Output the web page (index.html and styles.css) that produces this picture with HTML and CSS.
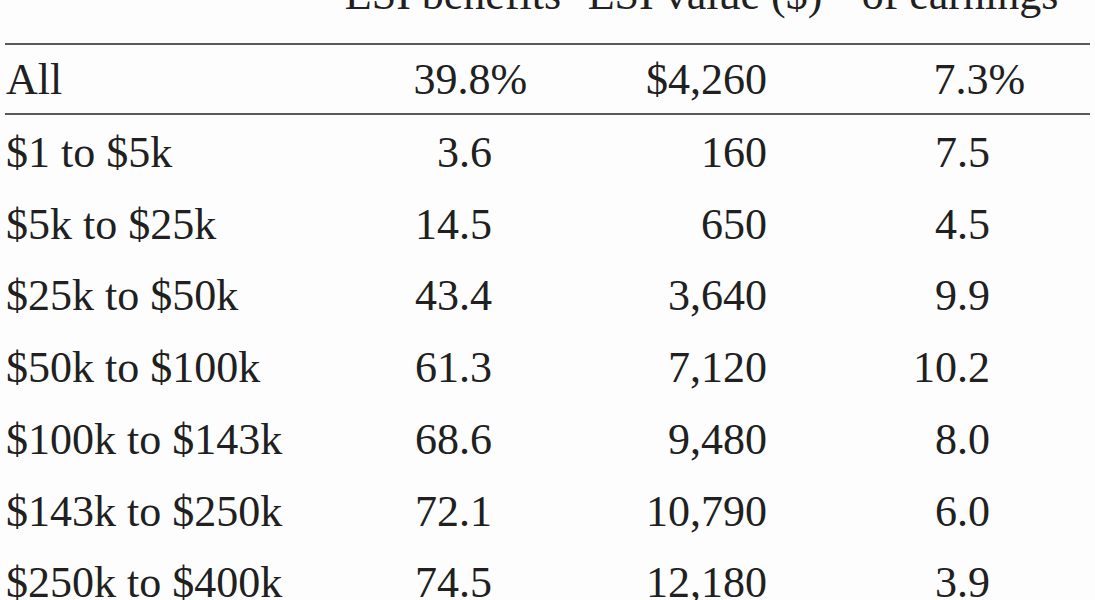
FILE: index.html
```html
<!DOCTYPE html>
<html lang="en">
<head>
    <meta charset="UTF-8">
    <meta name="viewport" content="width=device-width, initial-scale=1.0">
    <title>ESI benefits by earnings</title>
    <link rel="stylesheet" href="styles.css">
</head>
<body>
    <div class="esi-table">
        <div class="head-row">
            <div></div>
            <div class="head-cell">ESI benefits</div>
            <div class="head-cell">ESI value ($)</div>
            <div class="head-cell">of earnings</div>
        </div>

        <div class="row total">
            <div class="label">All</div>
            <div class="num">39.8<span class="pct">%</span></div>
            <div class="num">$4,260</div>
            <div class="num">7.3<span class="pct">%</span></div>
        </div>

        <div class="row">
            <div class="label">$1 to $5k</div>
            <div class="num">3.6</div>
            <div class="num">160</div>
            <div class="num">7.5</div>
        </div>
        <div class="row">
            <div class="label">$5k to $25k</div>
            <div class="num">14.5</div>
            <div class="num">650</div>
            <div class="num">4.5</div>
        </div>
        <div class="row">
            <div class="label">$25k to $50k</div>
            <div class="num">43.4</div>
            <div class="num">3,640</div>
            <div class="num">9.9</div>
        </div>
        <div class="row">
            <div class="label">$50k to $100k</div>
            <div class="num">61.3</div>
            <div class="num">7,120</div>
            <div class="num">10.2</div>
        </div>
        <div class="row">
            <div class="label">$100k to $143k</div>
            <div class="num">68.6</div>
            <div class="num">9,480</div>
            <div class="num">8.0</div>
        </div>
        <div class="row">
            <div class="label">$143k to $250k</div>
            <div class="num">72.1</div>
            <div class="num">10,790</div>
            <div class="num">6.0</div>
        </div>
        <div class="row">
            <div class="label">$250k to $400k</div>
            <div class="num">74.5</div>
            <div class="num">12,180</div>
            <div class="num">3.9</div>
        </div>
    </div>
</body>
</html>
```

FILE: styles.css
```css
* {
    margin: 0;
    padding: 0;
    box-sizing: border-box;
}
html, body {
    overflow: hidden;
}
body {
    font-family: "Liberation Serif", "Times New Roman", serif;
    font-size: 44px;
    background-color: #fdfdfd;
    color: #202020;
    padding-left: 5px;
}
.esi-table {
    width: 1085px;
}
/* header is cropped at the top edge in the source */
.head-row {
    display: grid;
    grid-template-columns: 323px 250px 254px 256px;
    line-height: 44px;
    margin-top: -27px;
    padding-bottom: 26px;
    border-bottom: 2px solid #5a5a5a;
}
.head-cell {
    text-align: center;
    white-space: nowrap;
}
.row {
    display: grid;
    grid-template-columns: 305px 182px 275px 223px;
    line-height: 71.7px;
    white-space: nowrap;
}
.row.total {
    line-height: 66px;
    padding-top: 2px;
    margin-bottom: 2px;
    border-bottom: 2px solid #5a5a5a;
}
.label {
    padding-left: 1px;
}
.num {
    text-align: right;
}
.pct {
    margin-right: -0.8em;
}
```
